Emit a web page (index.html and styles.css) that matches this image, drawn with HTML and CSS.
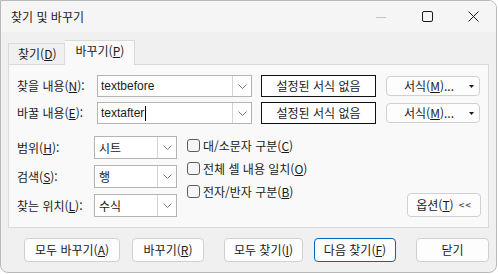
FILE: index.html
```html
<!DOCTYPE html>
<html lang="ko">
<head>
    <meta charset="UTF-8">
    <title>찾기 및 바꾸기</title>
    <link rel="stylesheet" href="styles.css">
</head>
<body>
    <div class="window">
        <div class="titlebar">
            <span class="title">찾기 및 바꾸기</span>
            <div class="controls">
                <span class="ctl">
                    <svg width="10" height="10" viewBox="0 0 10 10"><line x1="0" y1="5.5" x2="10" y2="5.5" stroke="#c4c4c4" stroke-width="1"/></svg>
                </span>
                <span class="ctl">
                    <svg width="11" height="11" viewBox="0 0 11 11"><rect x="0.5" y="0.5" width="10" height="10" rx="1.5" fill="none" stroke="#1a1a1a" stroke-width="1"/></svg>
                </span>
                <span class="ctl">
                    <svg width="11" height="11" viewBox="0 0 11 11"><path d="M0.5 0.5 L10.5 10.5 M10.5 0.5 L0.5 10.5" stroke="#1a1a1a" stroke-width="1"/></svg>
                </span>
            </div>
        </div>

        <div class="content">
            <div class="tabs">
                <div class="tab">찾기(<u>D</u>)</div>
                <div class="tab active">바꾸기(<u>P</u>)</div>
            </div>

            <div class="panel">
                <div class="find-row">
                    <span class="lbl">찾을 내용(<u>N</u>):</span>
                    <div class="combo text-combo">
                        <span class="val">textbefore</span>
                        <span class="drop"><svg width="9" height="5" viewBox="0 0 9 5"><polyline points="0.5,0.5 4.5,4.5 8.5,0.5" fill="none" stroke="#7a7a7a" stroke-width="1"/></svg></span>
                    </div>
                    <div class="preview">설정된 서식 없음</div>
                    <div class="btn fmt">서식(<u>M</u>)...<svg class="tri" width="5" height="3" viewBox="0 0 5 3"><polygon points="0,0 5,0 2.5,3" fill="#1a1a1a"/></svg></div>
                </div>
                <div class="find-row second">
                    <span class="lbl">바꿀 내용(<u>E</u>):</span>
                    <div class="combo text-combo">
                        <span class="val">textafter<span class="caret"></span></span>
                        <span class="drop"><svg width="9" height="5" viewBox="0 0 9 5"><polyline points="0.5,0.5 4.5,4.5 8.5,0.5" fill="none" stroke="#7a7a7a" stroke-width="1"/></svg></span>
                    </div>
                    <div class="preview">설정된 서식 없음</div>
                    <div class="btn fmt">서식(<u>M</u>)...<svg class="tri" width="5" height="3" viewBox="0 0 5 3"><polygon points="0,0 5,0 2.5,3" fill="#1a1a1a"/></svg></div>
                </div>

                <div class="lower">
                    <div class="selects">
                        <div class="sel-row">
                            <span class="lbl short">범위(<u>H</u>):</span>
                            <div class="combo small-combo">
                                <span class="val">시트</span>
                                <span class="drop"><svg width="9" height="5" viewBox="0 0 9 5"><polyline points="0.5,0.5 4.5,4.5 8.5,0.5" fill="none" stroke="#7a7a7a" stroke-width="1"/></svg></span>
                            </div>
                        </div>
                        <div class="sel-row">
                            <span class="lbl short">검색(<u>S</u>):</span>
                            <div class="combo small-combo">
                                <span class="val">행</span>
                                <span class="drop"><svg width="9" height="5" viewBox="0 0 9 5"><polyline points="0.5,0.5 4.5,4.5 8.5,0.5" fill="none" stroke="#7a7a7a" stroke-width="1"/></svg></span>
                            </div>
                        </div>
                        <div class="sel-row">
                            <span class="lbl short">찾는 위치(<u>L</u>):</span>
                            <div class="combo small-combo">
                                <span class="val">수식</span>
                                <span class="drop"><svg width="9" height="5" viewBox="0 0 9 5"><polyline points="0.5,0.5 4.5,4.5 8.5,0.5" fill="none" stroke="#7a7a7a" stroke-width="1"/></svg></span>
                            </div>
                        </div>
                    </div>

                    <div class="checks">
                        <div class="check"><span class="box"></span>대/소문자 구분(<u>C</u>)</div>
                        <div class="check"><span class="box"></span>전체 셀 내용 일치(<u>O</u>)</div>
                        <div class="check"><span class="box"></span>전자/반자 구분(<u>B</u>)</div>
                    </div>

                    <div class="btn options">옵션(<u>T</u>) <span class="chev">&lt;&lt;</span></div>
                </div>
            </div>

            <div class="actions">
                <div class="btn act w-replace-all">모두 바꾸기(<u>A</u>)</div>
                <div class="btn act w-replace">바꾸기(<u>R</u>)</div>
                <div class="btn act w-find-all">모두 찾기(<u>I</u>)</div>
                <div class="btn act w-find-next default">다음 찾기(<u>F</u>)</div>
                <div class="btn act w-close">닫기</div>
            </div>
        </div>
    </div>
</body>
</html>
```

FILE: styles.css
```css
html, body {
    margin: 0;
    padding: 0;
    background: #ffffff;
}
body {
    font-family: "Noto Sans CJK KR", "Noto Sans", sans-serif;
    font-size: 12px;
    line-height: 16px;
    color: #1a1a1a;
}
u {
    text-decoration-thickness: 1px;
    text-underline-offset: 1px;
}
.window {
    width: 497px;
    height: 273px;
    box-sizing: border-box;
    border: 1px solid #b9b9b9;
    border-radius: 0 8px 8px 8px;
    background: #f0f0f0;
    overflow: hidden;
}
.titlebar {
    height: 31px;
    display: flex;
    align-items: center;
    background: #f5f5f5;
}
.title {
    padding-left: 10px;
    flex: 1;
}
.controls {
    display: flex;
    height: 100%;
}
.ctl {
    width: 46px;
    display: flex;
    align-items: center;
    justify-content: center;
}
.content {
    padding-top: 8px;
}
.tabs {
    display: flex;
    align-items: flex-end;
    height: 24px;
    padding-left: 7px;
}
.tab {
    box-sizing: border-box;
    height: 21px;
    padding: 0 8px 0 9px;
    border: 1px solid #dadada;
    border-bottom: none;
    background: #f0f0f0;
    display: flex;
    align-items: center;
}
.tab.active {
    height: 25px;
    margin-bottom: -1px;
    padding: 0 10px 4px 10px;
    background: #f9f9f9;
    border-left: none;
    position: relative;
    z-index: 1;
}
.panel {
    box-sizing: border-box;
    width: 481px;
    height: 164px;
    margin-left: 7px;
    padding: 10px 0 0 8px;
    border: 1px solid #dadada;
    background: #f9f9f9;
}
.find-row {
    display: flex;
    align-items: center;
    height: 22px;
}
.find-row.second {
    margin-top: 5px;
}
.lbl {
    width: 80px;
    flex: none;
}
.lbl.short {
    width: 77px;
}
.combo {
    box-sizing: border-box;
    display: flex;
    align-items: stretch;
    border: 1px solid #b4b4b4;
    background: #ffffff;
}
.text-combo {
    width: 155px;
    height: 22px;
}
.combo .val {
    flex: 1;
    display: flex;
    align-items: center;
    padding-left: 3px;
}
.text-combo .val {
    font-family: "Liberation Sans", Arial, sans-serif;
    font-size: 12px;
}
.caret {
    display: inline-block;
    width: 1px;
    height: 15px;
    background: #000;
    margin-left: 1px;
}
.drop {
    width: 18px;
    border-left: 1px solid #d4d4d4;
    display: flex;
    align-items: center;
    justify-content: center;
}
.preview {
    box-sizing: border-box;
    width: 115px;
    height: 22px;
    margin-left: 9px;
    border: 1px solid #111;
    background: #ffffff;
    display: flex;
    align-items: center;
    justify-content: center;
}
.btn {
    box-sizing: border-box;
    border: 1px solid #d0d0d0;
    border-radius: 4px;
    background: #fdfdfd;
    display: flex;
    align-items: center;
    justify-content: center;
}
.fmt {
    width: 94px;
    height: 20px;
    margin-left: 10px;
    justify-content: flex-end;
    padding-right: 5px;
}
.fmt .tri {
    margin-left: 15px;
}
.lower {
    display: flex;
    margin-top: 12px;
    height: 81px;
}
.selects {
    display: flex;
    flex-direction: column;
    gap: 6px;
}
.sel-row {
    display: flex;
    align-items: center;
}
.small-combo {
    width: 83px;
    height: 23px;
}
.small-combo .val {
    padding-left: 4px;
}
.checks {
    margin-left: 10px;
    margin-top: -2px;
}
.check {
    height: 23px;
    display: flex;
    align-items: center;
}
.box {
    box-sizing: border-box;
    width: 13px;
    height: 13px;
    border: 1px solid #5c5c5c;
    border-radius: 3px;
    background: #f6f6f6;
    margin-right: 3px;
}
.options {
    width: 74px;
    height: 24px;
    margin-left: auto;
    margin-right: 7px;
    align-self: flex-end;
}
.chev {
    font-size: 10px;
    margin-left: 5px;
    letter-spacing: 1px;
}
.actions {
    display: flex;
    margin-top: 10px;
    padding-left: 23px;
}
.act {
    height: 24px;
}
.w-replace-all { width: 96px; }
.w-replace { width: 72px; margin-left: 12px; }
.w-find-all { width: 79px; margin-left: 20px; }
.w-find-next { width: 82px; margin-left: 11px; }
.w-close { width: 73px; margin-left: 20px; }
.default {
    border-color: #0067c0;
}
```
